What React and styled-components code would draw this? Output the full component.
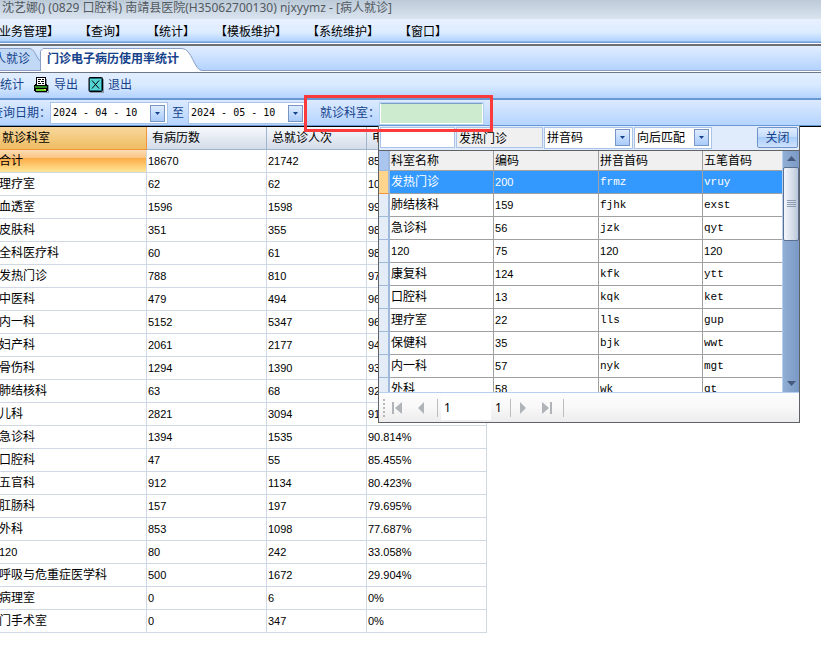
import React, { useState } from 'react';
import styled, { createGlobalStyle, css } from 'styled-components';

const GlobalStyle = createGlobalStyle`
  * {
    box-sizing: border-box;
  }
  body {
    margin: 0;
    overflow-x: hidden;
    background: #fff;
    color: #000;
    font-family: 'Liberation Sans', 'Noto Sans CJK SC', sans-serif;
    font-size: 12px;
    line-height: 16px;
  }
  button,
  input,
  select {
    font: inherit;
    margin: 0;
    padding: 0;
    border-radius: 0;
  }
`;

const Page = styled.div`
  overflow: hidden;
  white-space: nowrap;
`;

const TitleBar = styled.header`
  height: 19px;
  padding-left: 2px;
  background: linear-gradient(#bdcad8, #d9e4ef);
  color: #53595f;
  font-family: 'Noto Sans', 'Noto Sans CJK SC', sans-serif;
`;

const MenuBar = styled.nav`
  display: flex;
  gap: 20px;
  align-items: center;
  height: 27px;
  padding-bottom: 2px;
  background: linear-gradient(#e8f0ff, #dcecff 50%, #b0d3ff 22px, #6f9dd3 23px, #6f9dd3 24px, #fff 24px, #fff 25px, #6d6d75 25px);
`;

const MenuItem = styled.button`
  border: 0;
  background: none;
  text-spacing-trim: space-all;

  &:first-child {
    margin-left: -13px;
  }
`;

const TabStrip = styled.div`
  position: relative;
  display: flex;
  height: 27px;
  background: linear-gradient(#e1edff, #b3d3ff 24px, #8ba0c5 24px, #8ba0c5 25px, #fff 25px, #fff 26px, #6f7787 26px);
`;

const Tab = styled.button`
  position: relative;
  width: ${(props) => props.$width};
  height: 26px;
  padding-left: ${(props) => props.$pad};
  border: 0;
  background: none;
  text-align: left;
  color: #15428b;
  font-weight: ${(props) => (props.$active ? 'bold' : 'normal')};
  text-indent: ${(props) => (props.$active ? '0' : '-18px')};

  svg {
    position: absolute;
    left: 0;
    top: 0;
  }
  span {
    position: relative;
  }
`;

const ToolBar = styled.div`
  display: flex;
  align-items: center;
  gap: 10px;
  height: 27px;
  padding-bottom: 2px;
  border-bottom: 2px solid #6897d2;
  background: linear-gradient(#e2eeff, #d8e9ff 50%, #b3d3ff);
`;

const ToolButton = styled.button`
  display: flex;
  align-items: center;
  gap: 4px;
  border: 0;
  background: none;
  color: #15428b;
`;

const FilterBar = styled.div`
  display: flex;
  align-items: center;
  gap: 4px;
  height: 27px;
  border-bottom: 1px solid #000;
  box-shadow: inset 0 -1px #6897d2;
  background: linear-gradient(#dceaff, #b3d3ff);
  color: #15428b;
`;

const DateLabel = styled.label`
  width: 46px;
  text-indent: -9px;
`;

const ComboBox = styled.span`
  position: relative;
  display: flex;
  align-items: center;
  width: ${(props) => props.$width};
  height: 22px;
  padding: 2px;
  border: 1px solid #a9c4e8;
  background: #fff;

  input,
  select {
    appearance: none;
    flex: 1;
    min-width: 0;
    border: 0;
    outline: 0;
    background: none;
    color: #000;
  }
  input {
    font-family: 'DejaVu Sans Mono', monospace;
    font-size: 10px;
  }
`;

const DropButton = styled.button`
  display: flex;
  align-items: center;
  justify-content: center;
  width: 15px;
  height: 17px;
  border: 1px solid #7796c3;
  background: linear-gradient(#dfecff, #a9cbfb);
  pointer-events: ${(props) => (props.as ? 'none' : 'auto')};
`;

const DeptField = styled.div`
  position: relative;
  display: flex;
  align-items: center;
  align-self: stretch;
  padding-left: 10px;

  > label {
    width: 60px;
  }
`;

const DeptInput = styled.input`
  width: 103px;
  height: 21px;
  border: 1px solid #fff;
  border-top-color: #7aa0c8;
  outline: 1px solid #b4d1ee;
  background: #cdebcf;
`;

const Highlight = styled.div`
  position: absolute;
  inset: -5px -10px -6px -6px;
  z-index: 2;
  border: 3px solid #fb3a3c;
  pointer-events: none;
`;

const Popup = styled.section`
  position: absolute;
  left: 68px;
  top: 26px;
  z-index: 1;
  width: 422px;
  border: 1px solid #5f6266;
  border-top: 0;
  background: #e0ecfc;
  color: #000;
`;

const SearchRow = styled.div`
  display: flex;
  align-items: center;
  gap: 1px;
  height: 25px;
  padding: 1px 1px 2px;
  border-bottom: 1px solid #5f6266;
`;

const SearchInput = styled.input`
  width: ${(props) => props.$width};
  height: 21px;
  padding-left: 2px;
  border: 1px solid #a9c4e8;
  outline: 0;
  background: ${(props) => (props.readOnly ? '#f0f0f0' : '#fff')};
`;

const CloseButton = styled.button`
  width: 41px;
  height: 21px;
  margin-left: auto;
  border: 1px solid #6d93c8;
  border-radius: 2px;
  background: linear-gradient(#e0edff, #c2dafa 50%, #a9cdfb 50%, #cfe2fc);
  color: #15428b;
`;

const GridArea = styled.div`
  display: flex;
  height: 242px;
  overflow: hidden;
  border-bottom: 1px solid #b3d0f2;
`;

const cellText = css`
  padding: 0 0 0 ${(props) => (props.$first ? '0' : '2px')};
  text-align: left;
  font-weight: normal;
  font-family: ${(props) => (props.$code ? "'Liberation Mono'" : "'Liberation Sans'")}, 'Noto Sans CJK SC', sans-serif;
  font-size: ${(props) => (props.$latin ? '11px' : '12px')};
`;

const LookupTable = styled.table`
  flex: 1;
  align-self: flex-start;
  table-layout: fixed;
  border-collapse: separate;
  border-spacing: 0;
  background: #fff;
`;

const LookupRow = styled.tr`
  height: ${(props) => (props.$head ? '20px' : '23px')};
  background: ${(props) => (props.$selected ? '#3399ff' : props.$head ? '#f0f0f0' : '#fff')};
  color: ${(props) => (props.$selected ? '#fff' : '#000')};
`;

const LookupCell = styled.td`
  ${cellText}
  padding-left: 1px;
  border-right: 1px solid #a0a0a0;
  border-bottom: 1px solid #a0a0a0;

  &:last-child {
    border-right: 0;
  }
`;

const RowMark = styled.td`
  padding: 0;
  border-right: 2px solid #9fb9da;
  border-bottom: 1px solid ${(props) => (props.$selected ? '#f2943c' : '#9fb9da')};
  background: ${(props) => (props.$selected ? '#ffd58d' : props.$head ? '#aac6ee' : '#e4ecf7')};
`;

const ScrollTrack = styled.div`
  display: flex;
  flex-direction: column;
  align-items: center;
  width: 17px;
  border-left: 1px solid #b3d0f2;
  background: linear-gradient(90deg, #91aed4, #7999c5);

  svg {
    flex: none;
    margin: 5px 0 6px;
  }
`;

const ScrollThumb = styled.div`
  display: flex;
  align-items: center;
  justify-content: center;
  width: 16px;
  height: 74px;
  margin-bottom: auto;
  border: 1px solid #5d6f91;
  border-radius: 2px;
  background: linear-gradient(90deg, #f4f7fb, #d5dde9 60%, #b9c7db);

  &::after {
    content: '';
    width: 9px;
    height: 8px;
    background: repeating-linear-gradient(#8e9cb3 0 1px, transparent 1px 2px);
  }
`;

const Pager = styled.div`
  display: flex;
  align-items: center;
  height: 29px;
  padding-left: 4px;
  background: linear-gradient(#fdfdfd, #f8f8f8 50%, #ececec);
  font-family: 'Noto Sans', sans-serif;
`;

const Grip = styled.span`
  width: 2px;
  height: 18px;
  background: repeating-linear-gradient(#b8b8b8 0 2px, transparent 2px 4px);
`;

const PagerButton = styled.button`
  display: flex;
  align-items: center;
  justify-content: center;
  width: 24px;
  height: 24px;
  border: 0;
  background: none;
`;

const Divider = styled.span`
  width: 1px;
  height: 18px;
  margin: 0 0 0 4px;
  background: #bdbdbd;
`;

const PageInput = styled.input`
  width: 50px;
  height: 24px;
  margin-left: 3px;
  padding-left: 3px;
  border: 0;
  background: #fff;
`;

const PageCount = styled.span`
  width: 15px;
  padding-left: 4px;
`;

const ReportTable = styled.table`
  table-layout: fixed;
  width: 487px;
  border-collapse: separate;
  border-spacing: 0;
`;

const ReportHead = styled.th`
  ${cellText}
  height: 23px;
  padding-left: ${(props) => (props.$first ? '2px' : '5px')};
  border-right: 1px solid ${(props) => (props.$first ? '#f2943c' : '#9fb4cf')};
  border-bottom: 1px solid ${(props) => (props.$first ? '#f2943c' : '#9fb4cf')};
  background: ${(props) => (props.$first ? 'linear-gradient(#f8d79c, #efbd62)' : 'linear-gradient(#f7f9fc, #d4dce9)')};
`;

const ReportCell = styled.td`
  ${cellText}
  height: 23px;
  text-indent: -1px;
  border-right: 1px solid #d0d7e5;
  border-bottom: 1px solid #d0d7e5;
  background: ${(props) => (props.$active ? 'linear-gradient(#fcdcb4, #fbc584 35%, #feac48 38%, #fee797)' : '#fff')};
`;

const menus = ['【业务管理】', '【查询】', '【统计】', '【模板维护】', '【系统维护】', '【窗口】'];

const reportColumns = ['就诊科室', '有病历数', '总就诊人次', '电子病历使用率'];

const report = [
  ['合计', '18670', '21742', '85.871%'],
  ['理疗室', '62', '62', '100%'],
  ['血透室', '1596', '1598', '99.875%'],
  ['皮肤科', '351', '355', '98.873%'],
  ['全科医疗科', '60', '61', '98.361%'],
  ['发热门诊', '788', '810', '97.284%'],
  ['中医科', '479', '494', '96.964%'],
  ['内一科', '5152', '5347', '96.353%'],
  ['妇产科', '2061', '2177', '94.672%'],
  ['骨伤科', '1294', '1390', '93.094%'],
  ['肺结核科', '63', '68', '92.647%'],
  ['儿科', '2821', '3094', '91.176%'],
  ['急诊科', '1394', '1535', '90.814%'],
  ['口腔科', '47', '55', '85.455%'],
  ['五官科', '912', '1134', '80.423%'],
  ['肛肠科', '157', '197', '79.695%'],
  ['外科', '853', '1098', '77.687%'],
  ['120', '80', '242', '33.058%'],
  ['呼吸与危重症医学科', '500', '1672', '29.904%'],
  ['病理室', '0', '6', '0%'],
  ['门手术室', '0', '347', '0%'],
];

const departments = [
  ['发热门诊', '200', 'frmz', 'vruy'],
  ['肺结核科', '159', 'fjhk', 'exst'],
  ['急诊科', '56', 'jzk', 'qyt'],
  ['120', '75', '120', '120'],
  ['康复科', '124', 'kfk', 'ytt'],
  ['口腔科', '13', 'kqk', 'ket'],
  ['理疗室', '22', 'lls', 'gup'],
  ['保健科', '35', 'bjk', 'wwt'],
  ['内一科', '57', 'nyk', 'mgt'],
  ['外科', '58', 'wk', 'qt'],
];

const isLatin = (text) => /^[\w.%]+$/.test(text);
const isCode = (text) => /^[a-z]+$/.test(text);

const Arrow = ({ up, wide }) => (
  <svg width={wide ? 9 : 5} height={wide ? 5 : 3} viewBox="0 0 10 6" preserveAspectRatio="none">
    <path d={up ? 'M0 6L5 0L10 6Z' : 'M0 0H10L5 6Z'} fill={wide ? '#47597d' : '#15428b'} />
  </svg>
);

const PrinterIcon = () => (
  <svg width="16" height="16" viewBox="0 0 16 16" shapeRendering="crispEdges">
    <path d="M2 15h13v1H2zM14 8h1v7h-1zM12 2h1v6h-1z" fill="#8b9bb0" />
    <path d="M2 0h10v7h1v1h1v6h-1v1H1v-1H0V8h1V7h1z" fill="#000" />
    <path d="M3 1h8v7H3z" fill="#fff" />
    <path d="M4 2h3v1H4zM8 2h2v1H8zM4 4h2v1H4zM7 4h3v1H7zM4 6h3v1H4zM8 6h2v1H8z" fill="#000" />
    <path d="M1 9h12v2H1z" fill="#2e8b22" />
    <path d="M2 12h10v2H2z" fill="#6fd02c" />
    <path d="M10 12h2v1h-2z" fill="#f4e94a" />
  </svg>
);

const ExitIcon = () => (
  <svg width="16" height="16" viewBox="0 0 16 16">
    <path d="M2 15h13V2h1v14H2z" fill="#8b9bb0" />
    <rect x="1" y="0.5" width="13.500" height="14" rx="1" fill="#1d6d78" stroke="#000" />
    <rect x="2" y="2" width="11" height="11" fill="#52d5d3" />
    <path d="M4 3.500L11 11.500M11 3.500L4 11.500" stroke="#000" />
  </svg>
);

const PageIcon = ({ back, end }) => (
  <svg width="12" height="12" viewBox="0 0 12 12">
    <g transform={back ? 'matrix(-1 0 0 1 12 0)' : undefined} fill="#b0b4b9">
      <path d={end ? 'M1 0L8 6L1 12Z' : 'M3 0L9 6L3 12Z'} />
      {end && <path d="M9 0h2v12H9z" />}
    </g>
  </svg>
);

const DateBox = ({ id, label, value }) => {
  const [date, setDate] = useState(value);
  return (
    <ComboBox $width="118px">
      <input id={id} value={date} onChange={(e) => setDate(e.target.value)} />
      <DropButton aria-label={label}>
        <Arrow />
      </DropButton>
    </ComboBox>
  );
};

const SelectBox = ({ label, options, width }) => (
  <ComboBox $width={width}>
    <select aria-label={label}>
      {options.map((option) => (
        <option key={option}>{option}</option>
      ))}
    </select>
    <DropButton as="span">
      <Arrow />
    </DropButton>
  </ComboBox>
);

const DepartmentPopup = ({ onClose }) => {
  const [selected, setSelected] = useState(0);
  return (
    <Popup>
      <SearchRow>
        <SearchInput $width="75px" aria-label="检索" autoFocus />
        <SearchInput $width="87px" aria-label="当前科室" readOnly value={departments[selected][0]} />
        <SelectBox label="检索码" width="89px" options={['拼音码', '五笔码']} />
        <SelectBox label="匹配方式" width="78px" options={['向后匹配', '模糊匹配']} />
        <CloseButton onClick={onClose}>关闭</CloseButton>
      </SearchRow>
      <GridArea>
        <LookupTable>
          <colgroup>
            <col width="11" />
            <col width="104" />
            <col width="105" />
            <col width="104" />
            <col />
          </colgroup>
          <thead>
            <LookupRow $head>
              <RowMark $head />
              {['科室名称', '编码', '拼音首码', '五笔首码'].map((name) => (
                <LookupCell as="th" key={name}>
                  {name}
                </LookupCell>
              ))}
            </LookupRow>
          </thead>
          <tbody>
            {departments.map((row, i) => (
              <LookupRow key={row[1]} $selected={i === selected} onClick={() => setSelected(i)}>
                <RowMark $selected={i === selected} />
                {row.map((text, j) => (
                  <LookupCell key={j} $latin={isLatin(text)} $code={isCode(text)}>
                    {text}
                  </LookupCell>
                ))}
              </LookupRow>
            ))}
          </tbody>
        </LookupTable>
        <ScrollTrack>
          <Arrow up wide />
          <ScrollThumb />
          <Arrow wide />
        </ScrollTrack>
      </GridArea>
      <Pager>
        <Grip />
        <PagerButton aria-label="首页">
          <PageIcon back end />
        </PagerButton>
        <PagerButton aria-label="上一页">
          <PageIcon back />
        </PagerButton>
        <Divider />
        <PageInput aria-label="页码" defaultValue="1" />
        <PageCount>1</PageCount>
        <Divider />
        <PagerButton aria-label="下一页">
          <PageIcon />
        </PagerButton>
        <PagerButton aria-label="末页">
          <PageIcon end />
        </PagerButton>
        <Divider />
      </Pager>
    </Popup>
  );
};

const App = () => {
  const [open, setOpen] = useState(true);
  return (
    <>
      <GlobalStyle />
      <Page>
        <TitleBar>沈艺娜() (0829 口腔科) 南靖县医院(H35062700130) njxyymz - [病人就诊]</TitleBar>
        <MenuBar>
          {menus.map((name) => (
            <MenuItem key={name}>{name}</MenuItem>
          ))}
        </MenuBar>
        <TabStrip>
          <Tab $width="40px" $pad="0">
            <svg width="40" height="25" viewBox="0 0 40 25">
              <path d="M0 2.500H29C35 2.500 35 10 40 15V24H0Z" fill="#c2d9f6" />
              <path d="M0 2.500H29C35 2.500 35 10 40 15" fill="none" stroke="#8ba0c5" />
            </svg>
            <span>病人就诊</span>
          </Tab>
          <Tab $width="162px" $pad="7px" $active>
            <svg width="162" height="27" viewBox="0 0 162 27">
              <path d="M0.500 26V5L3 2.500H142C152 2.500 154 24.500 162 24.500V26Z" fill="#fff" />
              <path d="M0.500 25V5L3 2.500H142C152 2.500 154 24.500 162 24.500" fill="none" stroke="#8ba0c5" />
            </svg>
            <span>门诊电子病历使用率统计</span>
          </Tab>
        </TabStrip>
        <ToolBar>
          <ToolButton>统计</ToolButton>
          <ToolButton>
            <PrinterIcon />
            导出
          </ToolButton>
          <ToolButton>
            <ExitIcon />
            退出
          </ToolButton>
        </ToolBar>
        <FilterBar>
          <DateLabel htmlFor="from">查询日期：</DateLabel>
          <DateBox id="from" label="选择开始日期" value="2024 - 04 - 10" />
          <label htmlFor="to">至</label>
          <DateBox id="to" label="选择结束日期" value="2024 - 05 - 10" />
          <DeptField>
            <label htmlFor="dept">就诊科室：</label>
            <DeptInput id="dept" onFocus={() => setOpen(true)} />
            <Highlight />
            {open && <DepartmentPopup onClose={() => setOpen(false)} />}
          </DeptField>
        </FilterBar>
        <ReportTable>
          <colgroup>
            <col width="147" />
            <col width="120" />
            <col width="100" />
            <col width="120" />
          </colgroup>
          <thead>
            <tr>
              {reportColumns.map((name, i) => (
                <ReportHead key={name} $first={i === 0}>
                  {name}
                </ReportHead>
              ))}
            </tr>
          </thead>
          <tbody>
            {report.map((row, i) => (
              <tr key={row[0]}>
                {row.map((text, j) => (
                  <ReportCell key={j} $first={j === 0} $active={i === 0 && j === 0} $latin={isLatin(text)}>
                    {text}
                  </ReportCell>
                ))}
              </tr>
            ))}
          </tbody>
        </ReportTable>
      </Page>
    </>
  );
};

export default App;
